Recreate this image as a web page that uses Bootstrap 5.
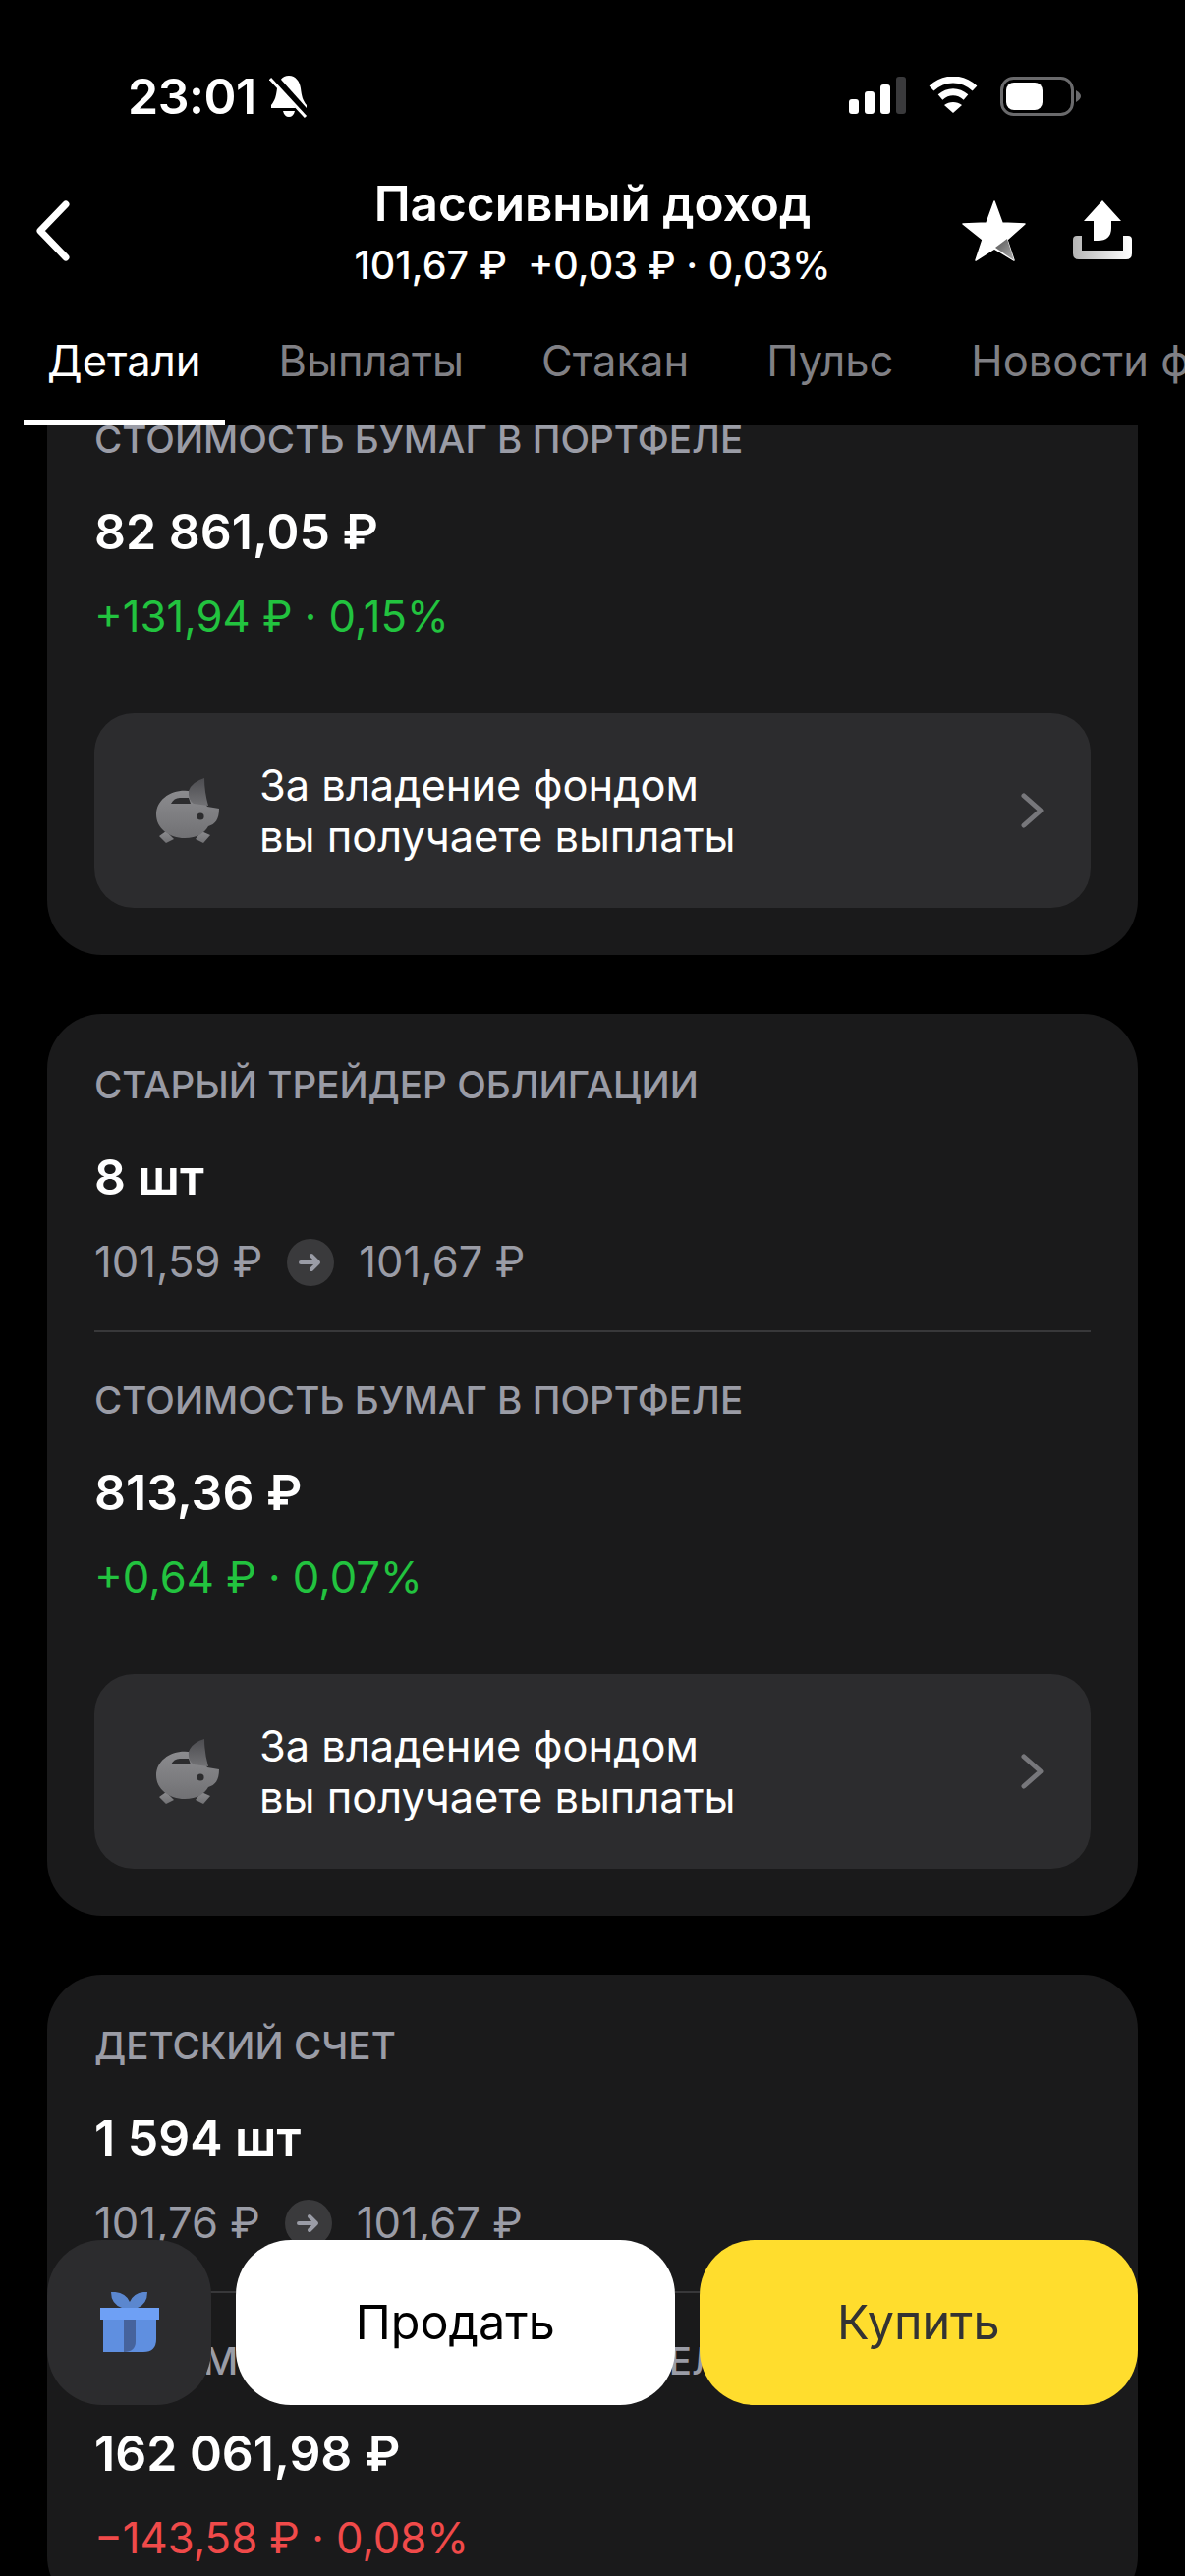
<!DOCTYPE html>
<html lang="ru">
<head>
    <meta charset="UTF-8">
    <meta name="viewport" content="width=device-width, initial-scale=1.0">
    <title>Пассивный доход</title>
    <link href="https://cdn.jsdelivr.net/npm/bootstrap@5.3.0/dist/css/bootstrap.min.css" rel="stylesheet">
    <style>
        :root {
            --panel: #1a1a1b;
            --panel-light: #2c2c2e;
            --muted: #9a9ca6;
        }

        html, body {
            background: #000;
            margin: 0;
        }

        body {
            font-family: Inter, "Liberation Sans", sans-serif;
            color: #fff;
        }

        .screen {
            width: 1206px;
            height: 2622px;
            overflow: hidden;
            position: relative;
            background: #000;
        }

        /* status bar */
        .status-bar {
            height: 170px;
            padding: 76px 106px 0 130px;
        }

        .clock {
            font-size: 50px;
            line-height: 44px;
            font-weight: 600;
            letter-spacing: -0.5px;
        }

        .bell {
            margin-left: 13px;
        }

        .status-icons {
            gap: 23px;
            padding-top: 2px;
        }

        /* title block */
        .title-row {
            height: 130px;
            padding: 0 54px 0 36px;
        }

        .title-side {
            flex: 1 1 0;
        }

        .title-center {
            margin-left: 18px;
        }

        .title-main {
            font-size: 49.5px;
            line-height: 60px;
            font-weight: 600;
        }

        .title-sub {
            font-size: 39.5px;
            line-height: 48px;
            font-weight: 500;
            margin-top: 9px;
        }

        /* tabs */
        .tabs-row {
            height: 133px;
            padding: 39px 0 0 24px;
            overflow: hidden;
        }

        .tab-item {
            font-size: 43.5px;
            line-height: 56px;
            color: #808085;
            padding: 0 25px 0 24px;
            margin-right: 30px;
            height: 94px;
            white-space: nowrap;
            flex: none;
        }

        .tab-on {
            color: #fff;
            border-bottom: 6px solid #fff;
        }

        /* cards */
        .scroll-area {
            padding: 0 48px;
            height: 2189px;
            overflow: hidden;
        }

        .fund-card {
            background: var(--panel);
            border-radius: 56px;
            padding: 48px 48px 48px;
            margin-bottom: 60px;
        }

        .fund-card-cut {
            margin-top: -10px;
            padding-top: 0;
            border-top-left-radius: 0;
            border-top-right-radius: 0;
        }

        .row-label {
            font-size: 38.6px;
            line-height: 48px;
            font-weight: 500;
            color: var(--muted);
        }

        .row-value {
            font-size: 50px;
            line-height: 56px;
            font-weight: 600;
        }

        .row-line {
            font-size: 43.6px;
            line-height: 52px;
            margin-top: 33px;
        }

        .row-price {
            color: var(--muted);
        }

        .row-up {
            color: #22c33f;
        }

        .row-down {
            color: #f04a4a;
        }

        .gap-value {
            margin-top: 42px;
        }

        .row-split {
            border-top: 2px solid #38383a;
            margin-top: 43px;
            padding-top: 45px;
        }

        .price-arrow {
            width: 48px;
            height: 48px;
            border-radius: 50%;
            background: #3a3a3c;
            margin: 0 25px;
        }

        .payout-box {
            background: var(--panel-light);
            border-radius: 40px;
            height: 198px;
            margin-top: 72px;
            padding: 0 47px 0 63px;
        }

        .payout-text {
            font-size: 43.4px;
            line-height: 52px;
            margin-left: 41px;
        }

        /* bottom buttons */
        .action-bar {
            position: absolute;
            left: 48px;
            right: 48px;
            bottom: 174px;
            height: 168px;
            gap: 25px;
        }

        .action-gift {
            width: 167px;
            background: var(--panel-light);
            border-radius: 56px;
        }

        .action-btn {
            flex: 1 1 0;
            border: 0;
            border-radius: 56px;
            font-size: 48.5px;
            font-weight: 400;
        }

        .action-sell, .action-sell:hover {
            background: #fff;
            color: #000;
        }

        .action-buy, .action-buy:hover {
            background: #ffdd2d;
            color: #333;
        }
    </style>
</head>
<body>
    <svg width="0" height="0" class="position-absolute">
        <defs>
            <linearGradient id="pigFill" x1="0" y1="0" x2="0" y2="1">
                <stop offset="0" stop-color="#8c8c8f"/>
                <stop offset="1" stop-color="#717174"/>
            </linearGradient>
            <linearGradient id="earFill" x1="0" y1="0" x2="0" y2="1">
                <stop offset="0" stop-color="#4c4c50"/>
                <stop offset="1" stop-color="#727275"/>
            </linearGradient>
            <linearGradient id="trayFill" x1="0" y1="0" x2="1" y2="0">
                <stop offset="0" stop-color="#b4b4b4"/>
                <stop offset="1" stop-color="#fff"/>
            </linearGradient>
            <linearGradient id="starShade" x1="0" y1="0" x2="1" y2="1">
                <stop offset="0" stop-color="#555"/>
                <stop offset="1" stop-color="#b0b0b0"/>
            </linearGradient>
            <symbol id="pig" viewBox="0 0 64 66">
                <path d="M3 59 L10 66 L18 62 L10 54Z M40 62 L48 66 L55 58 L46 54Z" fill="url(#pigFill)"/>
                <path fill-rule="evenodd" fill="url(#pigFill)" d="M29 12.7 C13 12.7 0 23 0 37 C0 51 13 61 29 61 C42 61 49 56 53 49 C60 47 64 42 64 31 L52 29 C46 18 38 12.7 29 12.7Z M15 26 Q18 20 24 20 H33 L35 26Z"/>
                <circle cx="45" cy="39" r="3.6" fill="#2c2c2e"/>
                <path d="M49 0 Q36 4 33 13 Q32 22 38 26 L53 28 Q49 14 49 0Z" fill="url(#earFill)"/>
            </symbol>
            <symbol id="arrow" viewBox="0 0 24 20">
                <path d="M2 10 H20 M13 3 L20 10 L13 17" fill="none" stroke="#9a9ca6" stroke-width="4" stroke-linecap="round" stroke-linejoin="round"/>
            </symbol>
            <symbol id="chev" viewBox="0 0 24 36">
                <path d="M3 3 L20 18 L3 33" fill="none" stroke="#77777b" stroke-width="5" stroke-linecap="round" stroke-linejoin="round"/>
            </symbol>
        </defs>
    </svg>

    <div class="screen">
        <div class="status-bar d-flex justify-content-between">
            <div class="d-flex align-items-start">
                <span class="clock">23:01</span>
                <svg class="bell" width="40" height="44" viewBox="0 0 40 44">
                    <path d="M20 1 C27 1 31 7 32 14 C33 22 34 26 38 31 V34 H2 V31 C6 26 7 22 8 14 C9 7 13 1 20 1Z M14 37 H26 C25 41 23 43 20 43 C17 43 15 41 14 37Z" fill="#fff"/>
                    <path d="M4 2 L38 40" stroke="#000" stroke-width="8"/>
                    <path d="M1 4 L37 43" stroke="#fff" stroke-width="3"/>
                </svg>
            </div>
            <div class="status-icons d-flex align-items-start">
                <svg width="58" height="38" viewBox="0 0 58 38">
                    <rect x="0" y="23" width="10" height="15" rx="3" fill="#fff"/>
                    <rect x="16" y="15" width="10" height="23" rx="3" fill="#fff"/>
                    <rect x="32" y="8" width="10" height="30" rx="3" fill="#fff"/>
                    <rect x="48" y="0" width="10" height="38" rx="3" fill="#3a3a3c"/>
                </svg>
                <svg width="50" height="38" viewBox="0 0 50 38">
                    <path d="M3 12 C16 0 34 0 47 12" fill="none" stroke="#fff" stroke-width="7"/>
                    <path d="M12 21 C20 14 30 14 38 21" fill="none" stroke="#fff" stroke-width="7"/>
                    <path d="M25 37 L16 29 C21 25 29 25 34 29Z" fill="#fff"/>
                </svg>
                <svg width="82" height="40" viewBox="0 0 82 40">
                    <rect x="1.5" y="1.5" width="72" height="37" rx="12" fill="none" stroke="#6a6a6c" stroke-width="3"/>
                    <rect x="6" y="6" width="37" height="28" rx="8" fill="#fff"/>
                    <path d="M77 14 Q82 17 82 20 Q82 23 77 26Z" fill="#6a6a6c"/>
                </svg>
            </div>
        </div>

        <div class="title-row d-flex align-items-center">
            <div class="title-side d-flex">
                <svg width="36" height="62" viewBox="0 0 36 62">
                    <path d="M31 4 L5 31 L31 58" fill="none" stroke="#fff" stroke-width="7" stroke-linecap="round" stroke-linejoin="round"/>
                </svg>
            </div>
            <div class="title-center text-center">
                <div class="title-main">Пассивный доход</div>
                <div class="title-sub">101,67 ₽ &nbsp;+0,03 ₽ · 0,03%</div>
            </div>
            <div class="title-side d-flex justify-content-end gap-5">
                <svg width="65" height="62" viewBox="0 0 65 62">
                    <path d="M33 1 L41 23 L64 24 L46 40 L53 61 L33 49 L14 61 L21 40 L1 24 L25 23Z" fill="#fff" stroke="#fff" stroke-width="1.5" stroke-linejoin="round"/>
                    <path d="M34 48 L46 39 L53 61Z" fill="url(#starShade)"/>
                </svg>
                <svg width="60" height="60" viewBox="0 0 60 60">
                    <path d="M30 0 L49 21 H39 V28 Q39 41 25 41 H21 V21 H11Z" fill="#fff"/>
                    <path d="M0 40 Q0 36 4 36 H9 V51 H51 V36 H56 Q60 36 60 40 V54 Q60 60 54 60 H6 Q0 60 0 54Z" fill="url(#trayFill)"/>
                </svg>
            </div>
        </div>

        <div class="tabs-row d-flex">
            <div class="tab-item tab-on">Детали</div>
            <div class="tab-item">Выплаты</div>
            <div class="tab-item">Стакан</div>
            <div class="tab-item">Пульс</div>
            <div class="tab-item">Новости фонда</div>
        </div>

        <div class="scroll-area">
            <div class="fund-card fund-card-cut">
                <div class="row-label">СТОИМОСТЬ БУМАГ В ПОРТФЕЛЕ</div>
                <div class="row-value gap-value">82 861,05 ₽</div>
                <div class="row-line row-up">+131,94 ₽ · 0,15%</div>
                <div class="payout-box d-flex align-items-center">
                    <svg width="64" height="66"><use href="#pig"/></svg>
                    <div class="payout-text flex-grow-1">За владение фондом<br>вы получаете выплаты</div>
                    <svg width="24" height="36"><use href="#chev"/></svg>
                </div>
            </div>

            <div class="fund-card">
                <div class="row-label">СТАРЫЙ ТРЕЙДЕР ОБЛИГАЦИИ</div>
                <div class="row-value gap-value">8 шт</div>
                <div class="row-line row-price d-flex align-items-center">
                    <span>101,59 ₽</span>
                    <span class="price-arrow d-flex align-items-center justify-content-center"><svg width="24" height="20"><use href="#arrow"/></svg></span>
                    <span>101,67 ₽</span>
                </div>
                <div class="row-split">
                    <div class="row-label">СТОИМОСТЬ БУМАГ В ПОРТФЕЛЕ</div>
                    <div class="row-value gap-value">813,36 ₽</div>
                    <div class="row-line row-up">+0,64 ₽ · 0,07%</div>
                </div>
                <div class="payout-box d-flex align-items-center">
                    <svg width="64" height="66"><use href="#pig"/></svg>
                    <div class="payout-text flex-grow-1">За владение фондом<br>вы получаете выплаты</div>
                    <svg width="24" height="36"><use href="#chev"/></svg>
                </div>
            </div>

            <div class="fund-card">
                <div class="row-label">ДЕТСКИЙ СЧЕТ</div>
                <div class="row-value gap-value">1 594 шт</div>
                <div class="row-line row-price d-flex align-items-center">
                    <span>101,76 ₽</span>
                    <span class="price-arrow d-flex align-items-center justify-content-center"><svg width="24" height="20"><use href="#arrow"/></svg></span>
                    <span>101,67 ₽</span>
                </div>
                <div class="row-split">
                    <div class="row-label">СТОИМОСТЬ БУМАГ В ПОРТФЕЛЕ</div>
                    <div class="row-value gap-value">162 061,98 ₽</div>
                    <div class="row-line row-down">−143,58 ₽ · 0,08%</div>
                </div>
            </div>
        </div>

        <div class="action-bar d-flex">
            <div class="action-gift d-flex align-items-center justify-content-center">
                <svg width="60" height="62" viewBox="0 0 60 62">
                    <path d="M11 0 Q25 -1 30 10 Q35 -1 48 0 Q48 12 38 16 H22 Q11 12 11 0Z" fill="#5b87cf"/>
                    <path d="M3 28 H57 V48 Q57 61 44 61 H3Z" fill="#5f8fe0"/>
                    <path d="M24 28 H36 V50 Q36 61 24 61Z" fill="#46639c"/>
                    <rect x="0" y="16" width="60" height="12" fill="#6ea0f5"/>
                </svg>
            </div>
            <button type="button" class="btn action-btn action-sell">Продать</button>
            <button type="button" class="btn action-btn action-buy">Купить</button>
        </div>
    </div>

    <script src="https://cdn.jsdelivr.net/npm/bootstrap@5.3.0/dist/js/bootstrap.bundle.min.js"></script>
</body>
</html>
